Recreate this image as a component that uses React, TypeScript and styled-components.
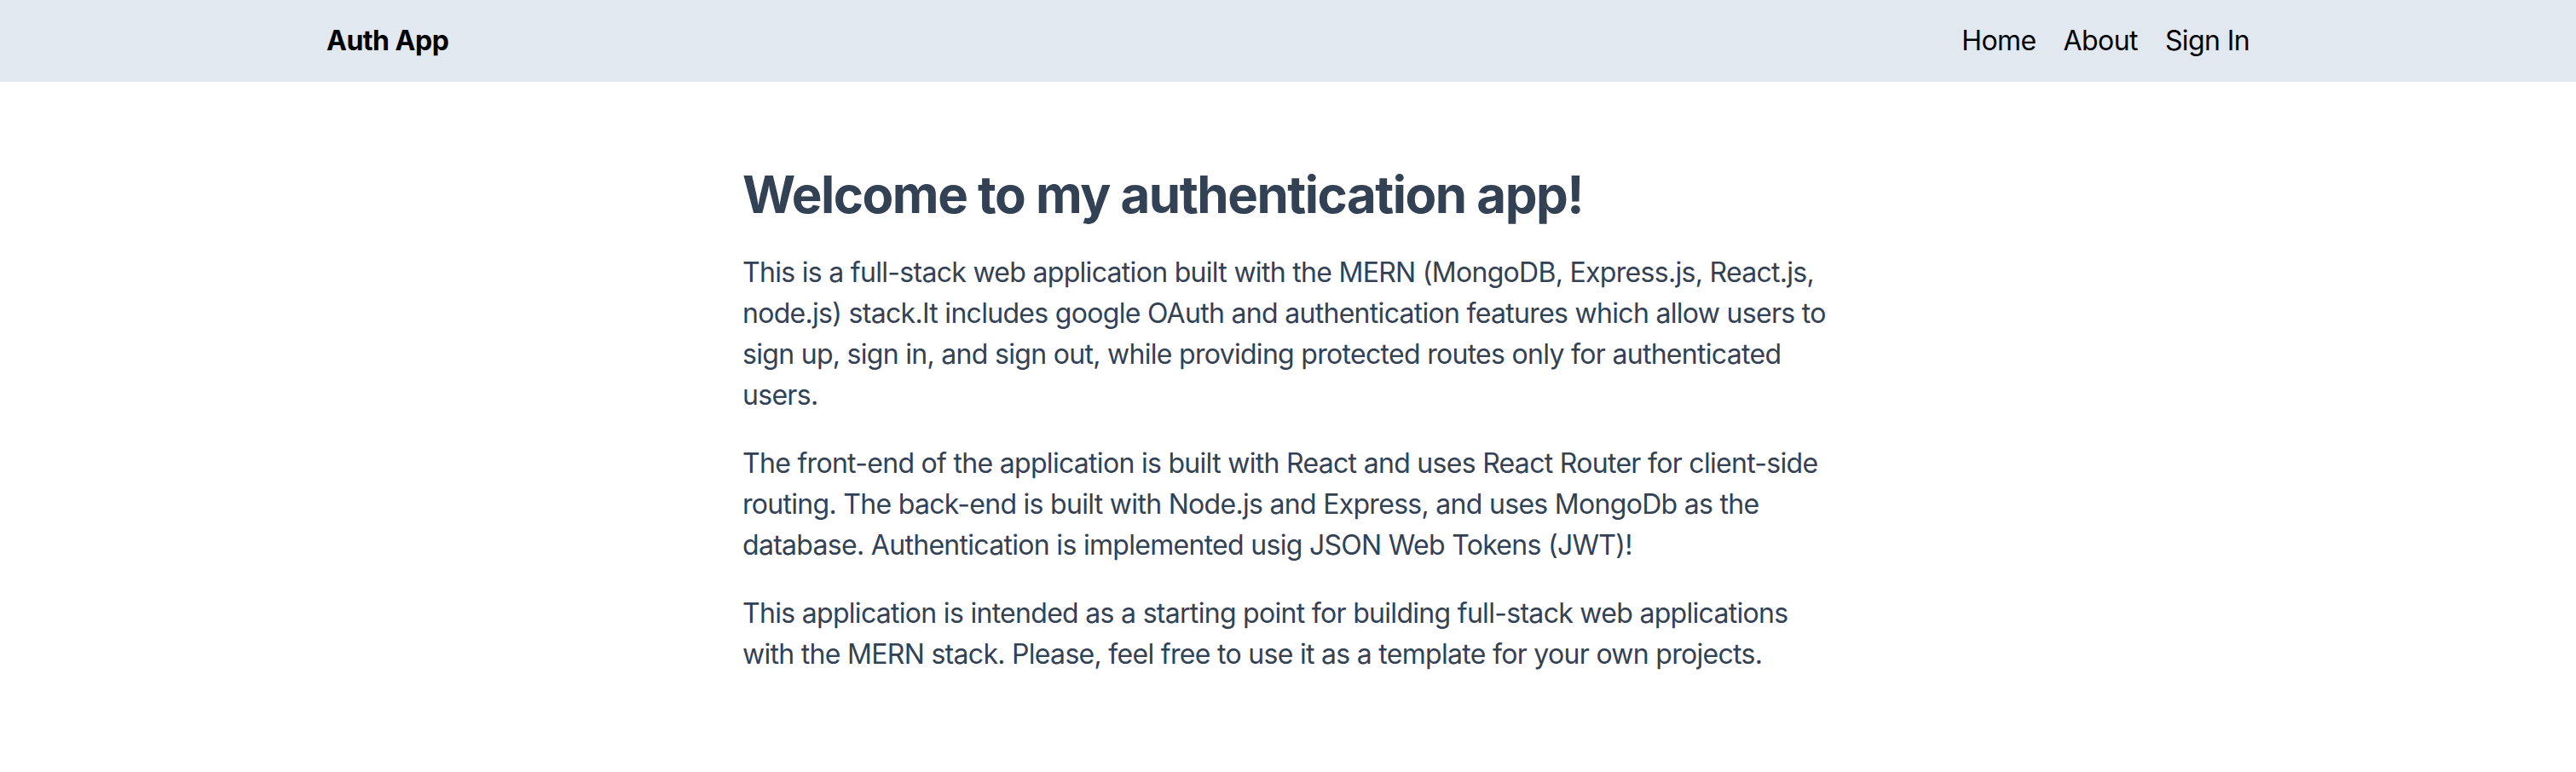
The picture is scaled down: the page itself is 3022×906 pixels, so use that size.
import React from "react";
import styled, { createGlobalStyle } from "styled-components";

const GlobalStyle = createGlobalStyle`
  html, body {
    margin: 0;
    padding: 0;
    background: #ffffff;
  }
  body {
    font-family: Inter, "Noto Sans", "Liberation Sans", sans-serif;
    color: #000000;
    -webkit-font-smoothing: antialiased;
  }
  * { box-sizing: border-box; }
`;

const HeaderBar = styled.header`
  background: #e2e8f0;
`;

const HeaderInner = styled.div`
  display: flex;
  justify-content: space-between;
  align-items: center;
  max-width: 2304px;
  margin: 0 auto;
  padding: 24px;
`;

const Brand = styled.h1`
  margin: 0;
  font-size: 32px;
  line-height: 48px;
  font-weight: 700;
  letter-spacing: -0.5px;
`;

const NavList = styled.ul`
  display: flex;
  gap: 32px;
  margin: 0;
  padding: 0;
  list-style: none;
`;

const NavItem = styled.li`
  font-size: 32px;
  line-height: 48px;
  color: #000000;
  letter-spacing: -0.6px;
`;

const Main = styled.main`
  max-width: 1344px;
  margin: 0 auto;
  padding: 96px 32px;
`;

const Title = styled.h1`
  margin: 0 0 32px;
  font-size: 60px;
  line-height: 72px;
  font-weight: 700;
  color: #334155;
  letter-spacing: -1.5px;
`;

const Paragraph = styled.p`
  margin: 0 0 32px;
  font-size: 32px;
  line-height: 48px;
  color: #334155;
  letter-spacing: -0.7px;
`;

export default function App() {
  return (
    <>
      <GlobalStyle />
      <HeaderBar>
        <HeaderInner>
          <Brand>Auth App</Brand>
          <NavList>
            <NavItem>Home</NavItem>
            <NavItem>About</NavItem>
            <NavItem>Sign In</NavItem>
          </NavList>
        </HeaderInner>
      </HeaderBar>
      <Main>
        <Title>Welcome to my authentication app!</Title>
        <Paragraph>
          This is a full-stack web application built with the MERN (MongoDB,
          Express.js, React.js, node.js) stack.It includes google OAuth and
          authentication features which allow users to sign up, sign in, and
          sign out, while providing protected routes only for authenticated
          users.
        </Paragraph>
        <Paragraph>
          The front-end of the application is built with React and uses React
          Router for client-side routing. The back-end is built with Node.js and
          Express, and uses MongoDb as the database. Authentication is
          implemented usig JSON Web Tokens (JWT)!
        </Paragraph>
        <Paragraph>
          This application is intended as a starting point for building
          full-stack web applications with the MERN stack. Please, feel free to
          use it as a template for your own projects.
        </Paragraph>
      </Main>
    </>
  );
}
